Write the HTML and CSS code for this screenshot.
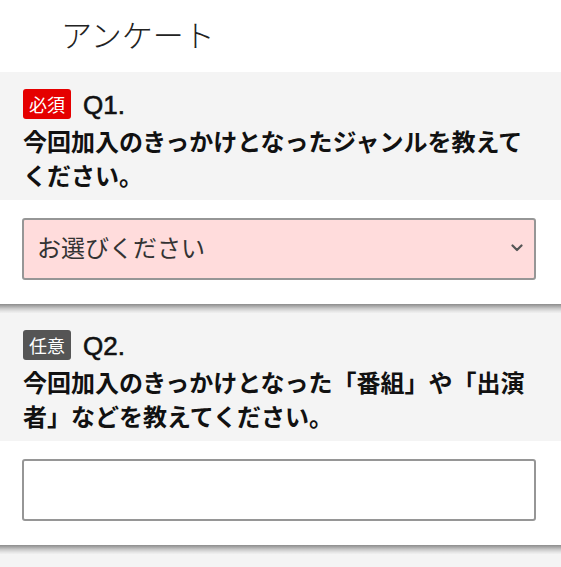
FILE: index.html
```html
<!DOCTYPE html>
<html lang="ja">
<head>
<meta charset="utf-8">
<title>アンケート</title>
<link rel="stylesheet" href="styles.css">
</head>
<body>
<header class="page-head">
  <h1 class="page-title">アンケート</h1>
</header>

<section class="question">
  <div class="q-head">
    <div class="q-label">
      <span class="badge badge-required">必須</span>
      <span class="q-num">Q1.</span>
    </div>
    <p class="q-text">今回加入のきっかけとなったジャンルを教えてください。</p>
  </div>
  <div class="q-body">
    <div class="select-wrap">
      <select class="control control-select">
        <option>お選びください</option>
      </select>
      <svg class="chevron" width="12" height="8" viewBox="0 0 12 8"><path d="M1.5 1.5 L6 6 L10.5 1.5" fill="none" stroke="#555" stroke-width="2.2" stroke-linecap="round" stroke-linejoin="round"/></svg>
    </div>
  </div>
  <div class="q-sep"></div>
</section>

<section class="question">
  <div class="q-head">
    <div class="q-label">
      <span class="badge badge-optional">任意</span>
      <span class="q-num">Q2.</span>
    </div>
    <p class="q-text">今回加入のきっかけとなった「番組」や「出演者」などを教えてください。</p>
  </div>
  <div class="q-body">
    <input class="control control-input" type="text">
  </div>
  <div class="q-sep"></div>
</section>
</body>
</html>
```
FILE: styles.css
```css
html, body {
  margin: 0;
  padding: 0;
  background: #f4f4f4;
  font-family: "Noto Sans CJK JP", "Noto Sans", sans-serif;
  color: #111;
}

.page-head {
  background: #fff;
  height: 72px;
  display: flex;
  align-items: center;
  padding-left: 61px;
}

.page-title {
  margin: 0;
  font-size: 31px;
  font-weight: 300;
  color: #222;
  line-height: 1;
  padding-bottom: 6px;
}

.q-head {
  background: #f4f4f4;
  padding: 17px 23px 8px 23px;
}

.q-label {
  display: flex;
  align-items: center;
  gap: 12px;
  height: 30px;
  margin-bottom: 5px;
}

.badge {
  display: inline-flex;
  align-items: center;
  justify-content: center;
  width: 48px;
  height: 30px;
  border-radius: 3px;
  color: #fff;
  font-size: 18px;
  font-weight: 400;
  line-height: 1;
}

.badge-required {
  background: #e50000;
}

.badge-optional {
  background: #555;
}

.q-num {
  font-family: "Liberation Sans", Arial, sans-serif;
  font-size: 26px;
  font-weight: 400;
  -webkit-text-stroke: 0.6px #111;
  color: #111;
  padding-top: 3px;
}

.q-text {
  margin: 0;
  font-size: 24px;
  line-height: 34px;
  font-weight: 700;
  color: #111;
}

.q-body {
  background: #fff;
  padding: 18px 25px 24px 22px;
}

.select-wrap {
  position: relative;
}

.control {
  display: block;
  box-sizing: border-box;
  width: 100%;
  height: 62px;
  margin: 0;
  border: 2px solid #969696;
  border-radius: 3px;
  font-family: "Noto Sans CJK JP", sans-serif;
  font-size: 24px;
  color: #333;
  outline: none;
}

.control-select {
  -webkit-appearance: none;
  appearance: none;
  background: #ffdcdc;
  padding: 0 40px 5px 13px;
}

.control-input {
  background: #fff;
  padding: 0 13px;
}

.chevron {
  position: absolute;
  right: 13px;
  top: 26px;
}

.q-sep {
  height: 9px;
  background: linear-gradient(to bottom, #8c8c8c 0%, #a6a6a6 22%, #c9c9c9 50%, #e4e4e4 80%, #f0f0f0 100%);
}
```
